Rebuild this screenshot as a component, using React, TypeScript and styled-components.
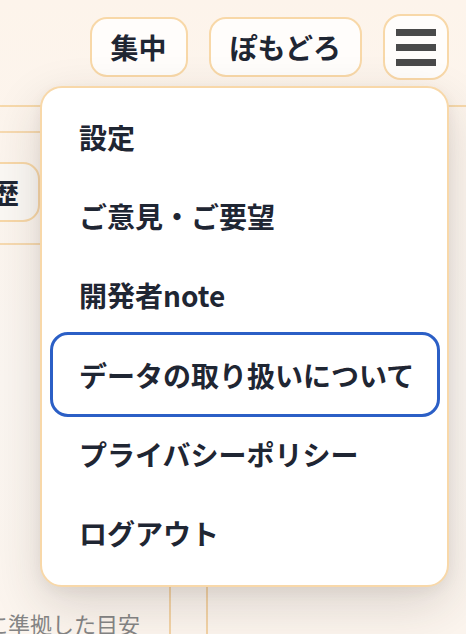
import React from "react";
import styled, { createGlobalStyle } from "styled-components";

const GlobalStyle = createGlobalStyle`
  html, body {
    margin: 0;
    padding: 0;
    background: #fcf5ee;
    font-family: "Noto Sans CJK JP", "Noto Sans", sans-serif;
    color: #1f2633;
    overflow: hidden;
  }
  * { box-sizing: border-box; }
`;

const Page = styled.div`
  width: 466px;
  height: 634px;
  overflow: hidden;
  background: linear-gradient(180deg, #fdf4eb 0%, #fbf6f1 60%, #fcf5ee 100%);
`;

const Header = styled.header`
  height: 107px;
  display: flex;
  justify-content: flex-end;
  align-items: flex-start;
  gap: 21px;
  padding: 14px 17px 0 0;
  border-bottom: 2px solid #f7d9ab;
`;

const Pill = styled.button`
  height: 60px;
  margin-top: 3px;
  padding: 0 19px;
  border: 2px solid #f8d8a8;
  border-radius: 17px;
  background: #fffdfb;
  font-family: inherit;
  font-weight: 700;
  font-size: 28px;
  line-height: 1;
  color: #1f2633;
  display: flex;
  align-items: center;
`;

const MenuAnchor = styled.div`
  position: relative;
`;

const Hamburger = styled.button`
  width: 66px;
  height: 66px;
  border: 2px solid #f8d8a8;
  border-radius: 18px;
  background: #fffdfb;
  display: flex;
  flex-direction: column;
  justify-content: center;
  align-items: center;
  gap: 8px;
  padding: 0;
`;

const Bar = styled.span`
  display: block;
  width: 40px;
  height: 7px;
  background: #4a4a4a;
`;

const Menu = styled.nav`
  position: absolute;
  top: 72px;
  right: 0;
  width: 409px;
  height: 501px;
  background: #ffffff;
  border: 2px solid #f8d8a9;
  border-radius: 22px;
  padding: 9px 10px 12px 11px;
  display: flex;
  flex-direction: column;
  box-shadow: 0 18px 50px rgba(50, 40, 30, 0.16), 0 4px 14px rgba(50, 40, 30, 0.06);
  z-index: 10;
`;

const MenuItem = styled.a<{ $focused?: boolean }>`
  height: 79.3px;
  flex: none;
  display: flex;
  align-items: center;
  padding-left: 26px;
  border-radius: 15px;
  font-weight: 700;
  font-size: 28px;
  line-height: 1;
  color: #1f2633;
  text-decoration: none;
  outline: ${(p) => (p.$focused ? "3px solid #2b5fc6" : "none")};
  outline-offset: 0;
`;

const Main = styled.main`
  display: flex;
  flex-direction: column;
`;

const Strip = styled.div`
  width: 200px;
  height: 26px;
  border-bottom: 2px solid #f7dab0;
`;

const TabRow = styled.div`
  width: 200px;
  height: 112px;
  border-bottom: 2px solid #f7dab0;
  display: flex;
  align-items: flex-start;
  padding-top: 29px;
  margin-left: -58px;
`;

const TabButton = styled.button`
  height: 60px;
  padding: 0 19px;
  border: 2px solid #f8d8a8;
  border-radius: 17px;
  background: #fbf8f4;
  font-family: inherit;
  font-weight: 700;
  font-size: 28px;
  line-height: 1;
  color: #1f2633;
`;

const TableArea = styled.div`
  display: grid;
  grid-template-columns: 171px 37px 1fr;
  height: 389px;
`;

const Cell = styled.div<{ $divider?: boolean }>`
  border-right: ${(p) => (p.$divider ? "2px solid #f3d3a6" : "none")};
  position: relative;
  overflow: visible;
`;

const Caption = styled.p`
  margin: 362px 0 0 -14px;
  white-space: nowrap;
  font-size: 22px;
  line-height: 1.5;
  color: #858585;
  font-weight: 400;
`;

const items = [
  "設定",
  "ご意見・ご要望",
  "開発者note",
  "データの取り扱いについて",
  "プライバシーポリシー",
  "ログアウト",
];

export default function App() {
  return (
    <Page>
      <GlobalStyle />
      <Header>
        <Pill>集中</Pill>
        <Pill>ぽもどろ</Pill>
        <MenuAnchor>
          <Hamburger aria-label="メニュー">
            <Bar />
            <Bar />
            <Bar />
          </Hamburger>
          <Menu role="menu">
            {items.map((label, i) => (
              <MenuItem key={label} href="#" $focused={i === 3} role="menuitem">
                {label}
              </MenuItem>
            ))}
          </Menu>
        </MenuAnchor>
      </Header>
      <Main>
        <Strip />
        <TabRow>
          <TabButton>履歴</TabButton>
        </TabRow>
        <TableArea>
          <Cell $divider>
            <Caption>に準拠した目安</Caption>
          </Cell>
          <Cell $divider />
          <Cell />
        </TableArea>
      </Main>
    </Page>
  );
}
